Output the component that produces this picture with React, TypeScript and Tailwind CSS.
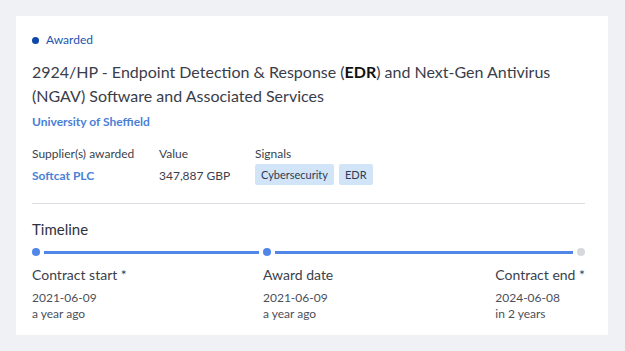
const tags = ["Cybersecurity", "EDR"];

const Milestone = ({ label, date, rel }: { label: string; date: string; rel: string }) => (
  <div>
    <div className="text-[14px] leading-[20px] text-[#3b3f4c]">{label}</div>
    <div className="mt-[5px] text-[12px] leading-[16px] text-[#4b4f5a]">{date}</div>
    <div className="text-[12px] leading-[15px] text-[#4b4f5a]">{rel}</div>
  </div>
);

export default function App() {
  return (
    <div className="h-[351px] w-[625px] bg-[#eff1f4] p-4 font-['Lato',sans-serif]">
      <div className="h-[319px] w-[592px] bg-white pb-[15px] pl-4 pr-[23px] pt-4">
        <div className="flex items-center gap-[7px] text-[12px] leading-[16px] text-[#1c54b0]">
          <span className="h-[7px] w-[7px] rounded-full bg-[#0d47a8]" />
          Awarded
        </div>
        <h1 className="mt-3 text-[16px] leading-[24px] text-[#3a3d4a]">
          2924/HP - Endpoint Detection &amp; Response (<b className="font-bold text-[#111]">EDR</b>) and Next-Gen Antivirus (NGAV) Software and Associated Services
        </h1>
        <a className="mt-[6px] block text-[12px] font-bold leading-[16px] text-[#4a7fd6]">University of Sheffield</a>

        <div className="mt-4 flex">
          <div className="w-[127px]">
            <div className="text-[12px] leading-[16px] text-[#3b3f4c]">Supplier(s) awarded</div>
            <div className="mt-[6px] text-[12px] font-bold leading-[16px] text-[#4a7fd6]">Softcat PLC</div>
          </div>
          <div className="w-[96px]">
            <div className="text-[12px] leading-[16px] text-[#3b3f4c]">Value</div>
            <div className="mt-[6px] text-[12px] leading-[16px] text-[#3b3f4c]">347,887 GBP</div>
          </div>
          <div>
            <div className="text-[12px] leading-[16px] text-[#3b3f4c]">Signals</div>
            <div className="mt-[2px] flex gap-[5px]">
              {tags.map((t) => (
                <span key={t} className="rounded-[2px] bg-[#d2e5f8] px-[6px] py-[3px] text-[11px] leading-[15px] text-[#2e3b55]">
                  {t}
                </span>
              ))}
            </div>
          </div>
        </div>

        <div className="mt-[18px] h-px bg-[#dcdee3]" />

        <div className="mt-[15px] text-[15px] leading-[20px] text-[#2f3240]">Timeline</div>

        {/* timeline track */}
        <div className="mt-[9px] flex h-[8px] items-center">
          <div className="flex w-[231px] items-center">
            <span className="h-[8px] w-[8px] shrink-0 rounded-full bg-[#4f86e8]" />
            <span className="mx-[4px] h-[3px] flex-1 bg-[#4f86e8]" />
          </div>
          <span className="h-[8px] w-[8px] shrink-0 rounded-full bg-[#4f86e8]" />
          <span className="mx-[4px] h-[3px] flex-1 bg-[#4f86e8]" />
          <span className="h-[8px] w-[8px] shrink-0 rounded-full bg-[#d6d8dc]" />
        </div>

        <div className="mt-[9px] flex">
          <div className="w-[231px]">
            <Milestone label="Contract start *" date="2021-06-09" rel="a year ago" />
          </div>
          <Milestone label="Award date" date="2021-06-09" rel="a year ago" />
          <div className="ml-auto">
            <Milestone label="Contract end *" date="2024-06-08" rel="in 2 years" />
          </div>
        </div>
      </div>
    </div>
  );
}
